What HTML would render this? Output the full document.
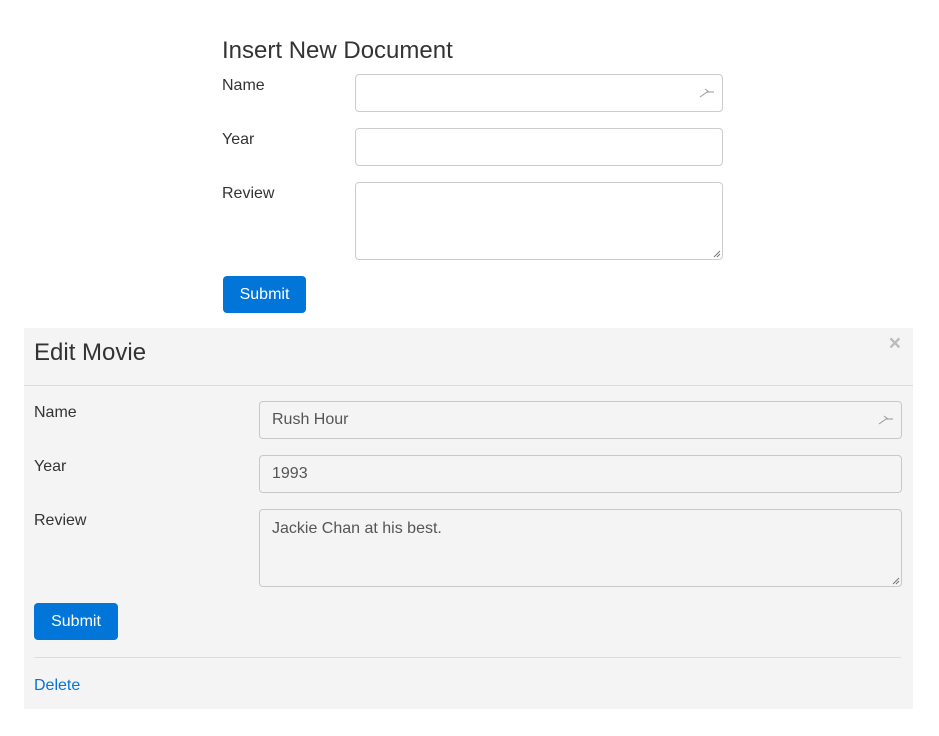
<!DOCTYPE html>
<html><head><style>
body{margin:0;background:#fff;font-family:"Liberation Sans",sans-serif;color:#333;font-size:16px;width:939px;height:736px;position:relative;overflow:hidden}
.a{position:absolute}
.in{position:absolute;box-sizing:border-box;border:1px solid #ccc;border-radius:4px;background:#fff;font-size:16px;color:#555;padding:0 12px;line-height:36px}
.g .in{background:#f4f4f4;border-color:#c8c8c8}
.btn{position:absolute;background:#0275d8;color:#fff;border-radius:4px;text-align:center;line-height:37px;font-size:16px}
.ic{position:absolute;right:6px;top:12px}
.rs{position:absolute;right:1px;bottom:1px}
</style></head><body>
<div class="a" style="left:222px;top:37px;font-size:24px;">Insert New Document</div>
<div class="a" style="left:222px;top:77px">Name</div>
<div class="a" style="left:222px;top:131px">Year</div>
<div class="a" style="left:222px;top:185px">Review</div>
<div class="in" style="left:355px;top:74px;width:368px;height:38px"><svg class="ic" width="18" height="12"><path d="M2 10 L9 5 L16 5 M7 2 L11 5" stroke="#999" fill="none" stroke-width="1"/></svg></div>
<div class="in" style="left:355px;top:128px;width:368px;height:38px"></div>
<div class="in" style="left:355px;top:182px;width:368px;height:78px"><svg class="rs" width="8" height="8"><path d="M7 1L1 7M7 4L4 7" stroke="#777"/></svg></div>
<div class="btn" style="left:223px;top:276px;width:83px;height:37px">Submit</div>

<div class="a g" style="left:24px;top:328px;width:889px;height:381px;background:#f4f4f4">
<div class="a" style="left:10px;top:11px;font-size:24px">Edit Movie</div>
<div class="a" style="right:12px;top:4px;font-size:21px;font-weight:bold;color:#bbb">×</div>
<div class="a" style="left:0;top:57px;width:889px;height:1px;background:#ddd"></div>
<div class="a" style="left:10px;top:76px">Name</div>
<div class="a" style="left:10px;top:130px">Year</div>
<div class="a" style="left:10px;top:184px">Review</div>
<div class="in" style="left:235px;top:73px;width:643px;height:38px">Rush Hour<svg class="ic" width="18" height="12"><path d="M2 10 L9 5 L16 5 M7 2 L11 5" stroke="#999" fill="none" stroke-width="1"/></svg></div>
<div class="in" style="left:235px;top:127px;width:643px;height:38px">1993</div>
<div class="in" style="left:235px;top:181px;width:643px;height:78px;line-height:normal;padding-top:10px">Jackie Chan at his best.<svg class="rs" width="8" height="8"><path d="M7 1L1 7M7 4L4 7" stroke="#777"/></svg></div>
<div class="btn" style="left:10px;top:275px;width:84px;height:37px">Submit</div>
<div class="a" style="left:10px;top:329px;width:867px;height:1px;background:#ddd"></div>
<div class="a" style="left:10px;top:349px;color:#0275d8">Delete</div>
</div>
</body></html>
